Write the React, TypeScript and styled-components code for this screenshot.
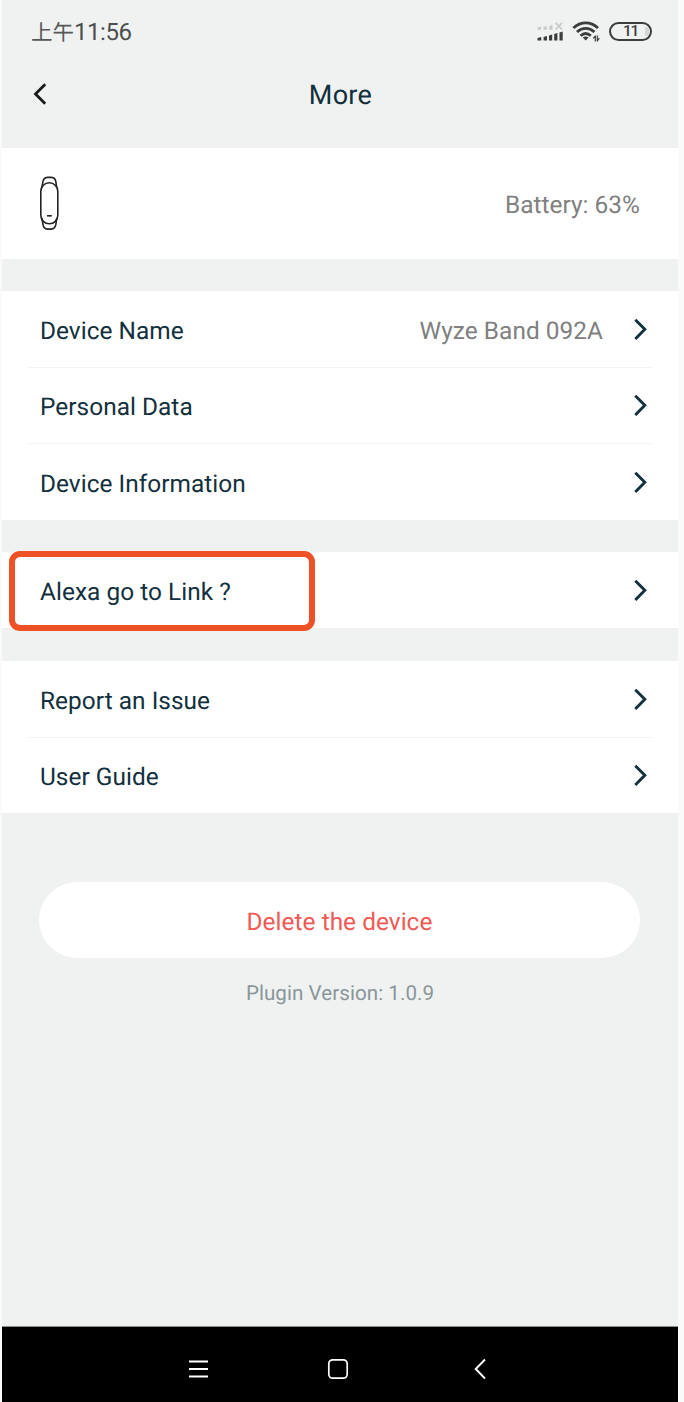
import React from "react";
import styled, { createGlobalStyle } from "styled-components";

const Global = createGlobalStyle`
  * { box-sizing: border-box; }
  body {
    margin: 0;
    background: #fafafa;
    font-family: Roboto, "Noto Sans CJK SC", sans-serif;
    text-rendering: geometricPrecision;
  }
  svg { display: block; flex: none; }
`;

const Screen = styled.main`
  width: 676px;
  height: 1402px;
  margin-left: 2px;
  background: #f0f2f1;
  display: flex;
  flex-direction: column;
`;

const StatusBar = styled.div`
  height: 62px;
  flex: none;
  padding: 0 26px 0 29px;
  display: flex;
  align-items: center;
  justify-content: space-between;
`;

const Clock = styled.span`
  display: flex;
  align-items: baseline;
  margin-top: 2px;
  font-family: "Noto Sans CJK SC", sans-serif;
  font-size: 21.5px;
  line-height: 30px;
  color: #555857;
`;

const Digits = styled.span`
  font-family: Roboto, sans-serif;
  font-size: 24px;
  letter-spacing: -0.45px;
  color: #4c4f4e;
`;

const StatusIcons = styled.div`
  display: flex;
  align-items: center;
  gap: 9px;
`;

const Battery = styled.div`
  position: relative;
  width: 43px;
  height: 19px;
  border: 2px solid #3b3e3d;
  border-radius: 10px;
  display: flex;
  align-items: center;
  justify-content: center;
  font: 500 15.5px/15px Roboto, sans-serif;
  letter-spacing: -1.2px;
  color: #3b3e3d;
  overflow: hidden;
  &::after {
    content: "";
    position: absolute;
    right: 1px;
    top: 3px;
    width: 4px;
    height: 9px;
    background: #d5d7d6;
    border-radius: 0 3px 3px 0;
  }
`;

const Header = styled.header`
  height: 86px;
  flex: none;
  padding: 0 30px 22px;
  display: grid;
  grid-template-columns: 40px 1fr 40px;
  align-items: center;
`;

const Title = styled.h1`
  margin: 2px 0 0 1px;
  font-weight: 400;
  font-size: 27px;
  line-height: 32px;
  letter-spacing: 0.3px;
  text-align: center;
  color: #12303d;
`;

const DeviceCard = styled.section`
  height: 111px;
  flex: none;
  padding: 0 38px 0 37px;
  display: flex;
  align-items: center;
  justify-content: space-between;
  background: #fff;
`;

const Group = styled.section<{ $gap?: number }>`
  margin-top: ${(p) => p.$gap ?? 32}px;
  flex: none;
  background: #fff;
`;

const Row = styled.div<{ $height?: number }>`
  height: ${(p) => p.$height ?? 76}px;
  padding: 2px 30px 0 38px;
  display: flex;
  align-items: center;
`;

const Divider = styled.hr`
  height: 1px;
  border: 0;
  margin: 0 26px -1px;
  background: #f3f4f4;
`;

const Label = styled.span`
  margin-top: 2px;
  font-size: 24.4px;
  line-height: 30px;
  letter-spacing: 0.04px;
  color: #12303d;
  flex: 1;
`;

const Value = styled.span<{ $end?: number }>`
  font-size: 24.4px;
  line-height: 30px;
  letter-spacing: 0.04px;
  color: #808080;
  margin-top: 2px;
  margin-right: ${(p) => p.$end ?? 0}px;
`;

const LinkRow = styled(Row)`
  position: relative;
`;

const Highlight = styled.div`
  position: absolute;
  left: 7px;
  top: -1px;
  width: 306px;
  height: 80px;
  border: 6px solid #ee5126;
  border-radius: 11px;
`;

const DeleteButton = styled.button`
  width: 601px;
  height: 76px;
  margin: 69px 0 0 37px;
  padding: 2px 0 0;
  flex: none;
  border: 0;
  border-radius: 38px;
  background: #fff;
  font-family: inherit;
  font-size: 24.4px;
  letter-spacing: 0.04px;
  text-rendering: inherit;
  color: #f05a54;
`;

const Version = styled.p`
  margin: 23px 0 0;
  font-size: 20.6px;
  line-height: 26px;
  letter-spacing: 0.04px;
  text-align: center;
  color: #8a9699;
`;

const NavBar = styled.nav`
  height: 76px;
  flex: none;
  margin-top: auto;
  padding: 9px 0 0 186px;
  border-top: 1px solid #8b8c8c;
  background: #000;
  display: grid;
  grid-template-columns: 139px 146px 14px;
  align-items: center;
`;

const Chevron = () => (
  <svg width="16" height="24" viewBox="0 0 16 24" fill="none" stroke="#12303d" strokeWidth="2.9">
    <path d="M3.3 1.7 L12.8 11.3 L3.3 20.9" />
  </svg>
);

const Signal = () => (
  <svg width="26" height="20" viewBox="0 0 26 20">
    <g fill="#c9cbca">
      <path d="M0.5 6.6l3.6-1v3.2H0.5zM6.5 5.9l3.4-1v3.9H6.5zM12.3 5.1l3.2-1v4.7h-3.2z" />
      <path d="M18.7 1.9l6.3 6.6M25 1.9l-6.3 6.6" stroke="#c9cbca" strokeWidth="1.8" />
    </g>
    <path fill="#3b3e3d" d="M0.5 17.1l3.8-1v3.5H0.5zM6.6 16.1l3.4-1v4.5H6.6zM12 14.4l3.2-1v6.2h-3.2zM17.2 12.9l3.2-1v7.7h-3.2zM22.5 11.5l3.2-1v9.1h-3.2z" />
  </svg>
);

const Wifi = () => (
  <svg width="28" height="22" viewBox="0 0 28 22" fill="none" stroke="#3b3e3d" strokeWidth="2.9">
    <path d="M1.4 8C8.9 1.2 18.5 1.2 26 8" />
    <path d="M5 12c5.3-4.9 12.1-4.9 17.4 0" />
    <path d="M8.6 15.8c3.3-3 6.9-3 10.2 0" />
    <path d="M10.8 17.6q2.9-2.3 5.8 0L13.7 20.4z" fill="#3b3e3d" stroke="none" />
    <path d="M23.3 15.4v6M25.3 15.4v6M23.3 15.8l-2 2.6M25.3 20.8l2-2.6" strokeWidth="1.2" />
  </svg>
);

const BackArrow = () => (
  <svg width="16" height="24" viewBox="0 0 16 24" fill="none" stroke="#171a1b" strokeWidth="2.8">
    <path d="M13.2 2.3 L3.5 12 L13.2 21.7" />
  </svg>
);

const Band = () => (
  <svg width="22" height="56" viewBox="0 0 22 56" fill="none" stroke="#202224" strokeWidth="1.6">
    <rect x="1.8" y="6.8" width="17" height="41" rx="8.5" />
    <path d="M2.8 12L4 5.4Q4.8 1.6 8.2 1.4h4.2Q16 1.6 16.8 5.4L17.8 12M2.8 42L4 48.7Q4.8 52.9 8.4 53.1h3.8q3.8-.2 4.6-4.4l1-6.7" />
    <path d="M8 39.8h4.8" />
  </svg>
);

const MenuIcon = () => (
  <svg width="21" height="20" viewBox="0 0 21 20" stroke="#fff" strokeWidth="2">
    <path d="M1 2.5h19M1 10h19M1 17.5h19" />
  </svg>
);

const HomeIcon = () => (
  <svg width="22" height="22" viewBox="0 0 22 22" fill="none" stroke="#fff" strokeWidth="1.7">
    <rect x="1.8" y="1.8" width="18.4" height="18.4" rx="4" />
  </svg>
);

const NavBack = () => (
  <svg width="14" height="22" viewBox="0 0 14 22" fill="none" stroke="#fff" strokeWidth="1.9">
    <path d="M12 1.5 L2.7 11 L12 20.5" />
  </svg>
);

export default function App() {
  return (
    <>
      <Global />
      <Screen>
        <StatusBar>
          <Clock>
            上午<Digits>11:56</Digits>
          </Clock>
          <StatusIcons>
            <Signal />
            <Wifi />
            <Battery>11</Battery>
          </StatusIcons>
        </StatusBar>
        <Header>
          <BackArrow />
          <Title>More</Title>
        </Header>
        <DeviceCard>
          <Band />
          <Value>Battery: 63%</Value>
        </DeviceCard>
        <Group>
          <Row>
            <Label>Device Name</Label>
            <Value $end={29}>Wyze Band 092A</Value>
            <Chevron />
          </Row>
          <Divider />
          <Row>
            <Label>Personal Data</Label>
            <Chevron />
          </Row>
          <Divider />
          <Row $height={77}>
            <Label>Device Information</Label>
            <Chevron />
          </Row>
        </Group>
        <Group>
          <LinkRow>
            <Label>Alexa go to Link ?</Label>
            <Chevron />
            <Highlight />
          </LinkRow>
        </Group>
        <Group $gap={33}>
          <Row>
            <Label>Report an Issue</Label>
            <Chevron />
          </Row>
          <Divider />
          <Row>
            <Label>User Guide</Label>
            <Chevron />
          </Row>
        </Group>
        <DeleteButton>Delete the device</DeleteButton>
        <Version>Plugin Version: 1.0.9</Version>
        <NavBar>
          <MenuIcon />
          <HomeIcon />
          <NavBack />
        </NavBar>
      </Screen>
    </>
  );
}
